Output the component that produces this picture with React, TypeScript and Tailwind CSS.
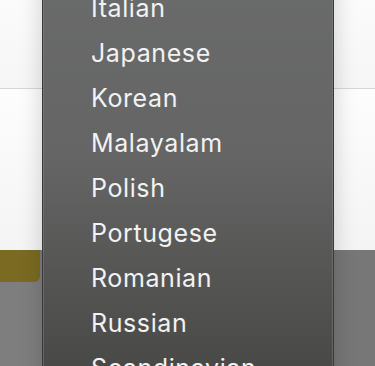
import React from "react";

const items = ["Hungarian", "Italian", "Japanese", "Korean", "Malayalam", "Polish", "Portugese", "Romanian", "Russian", "Scandinavian"];

export default function App() {
  return (
    <div className="relative w-[375px] h-[366px] overflow-hidden bg-[#fafafa]" style={{ fontFamily: "Inter, 'Liberation Sans', sans-serif" }}>
      <div className="flex flex-col h-full">
        <div className="h-[88px] bg-gradient-to-b from-[#fbfbfb] to-[#f6f6f6]" />
        <div className="h-px bg-[#d6d6d6]" />
        <div className="h-[161px] bg-gradient-to-b from-[#fdfdfd] to-[#f4f4f4]" />
        <div className="flex-1 flex bg-[#777777]">
          <div className="w-[42px] flex flex-col bg-[#7e7e7e]">
            <div className="h-[32px] w-[40px] bg-[#7a6a22] rounded-br-[6px]" />
          </div>
        </div>
      </div>
      <div className="absolute left-[42px] top-[-80px] w-[292px] h-[480px] border border-[#3a3a3a] bg-gradient-to-b from-[#6b6c6c] via-[#646564] to-[#454543] shadow-[0_0_22px_rgba(0,0,0,0.18)]">
        <div className="absolute inset-0 border-x border-[#8a8a8a]/40" />
        <ul className="pt-[20px] pl-[48px]">
          {items.map((t) => (
            <li key={t} className="h-[45px] flex items-center text-[25px] text-[#f2f2f2] tracking-[0.6px]">
              {t}
            </li>
          ))}
        </ul>
      </div>
    </div>
  );
}
